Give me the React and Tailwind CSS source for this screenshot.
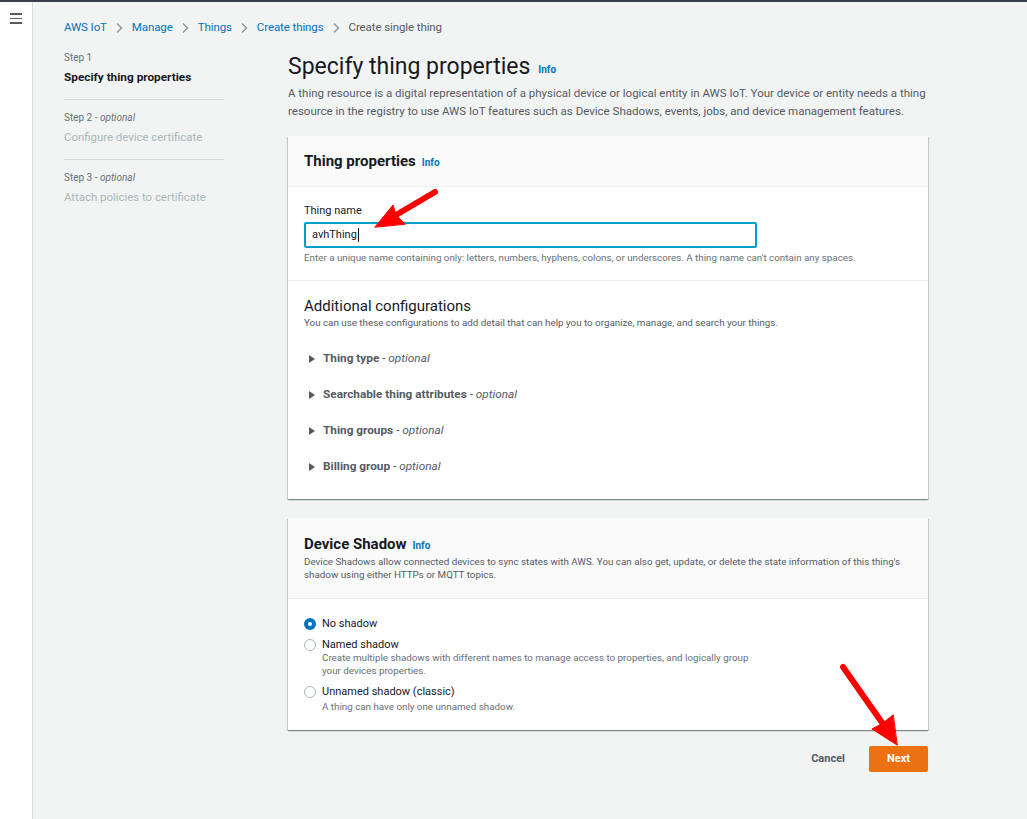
import React from 'react';

const Info = ({ className = '' }) => (
  <span className={`text-[10px] font-bold text-[#0073bb] ${className}`}>Info</span>
);

const Caret = () => (
  <svg width="8" height="10" viewBox="0 0 8 10" className="mr-[7px] shrink-0">
    <path d="M1 1 L7 5 L1 9 Z" fill="#545b64" />
  </svg>
);

const Crumb = ({ children, last }) => (
  <>
    <span className={last ? 'text-[#545b64]' : 'text-[#0073bb]'}>{children}</span>
    {!last && (
      <svg width="10" height="12" viewBox="0 0 10 12" className="mx-[7.5px]">
        <path d="M3 1.5 L7.5 6 L3 10.5" fill="none" stroke="#879596" strokeWidth="1.4" />
      </svg>
    )}
  </>
);

const Radio = ({ checked }) =>
  checked ? (
    <span className="mt-[2px] flex h-[12px] w-[12px] shrink-0 items-center justify-center rounded-full bg-[#0073bb]">
      <span className="h-[4px] w-[4px] rounded-full bg-white" />
    </span>
  ) : (
    <span className="mt-[2px] h-[12px] w-[12px] shrink-0 rounded-full border border-[#aab7b8] bg-white" />
  );

const Expander = ({ title }) => (
  <div className="flex h-[36px] items-center text-[11.8px]">
    <Caret />
    <span className="font-bold text-[#545b64]">{title}</span>
    <span className="ml-[3px] italic text-[#545b64]">- optional</span>
  </div>
);

const StepNav = () => (
  <div className="w-[160px] shrink-0 pt-[1px] text-[11.4px]">
    <div className="text-[10px] leading-[14px] text-[#687078]">Step 1</div>
    <div className="mt-[4px] text-[11.8px] font-bold leading-[16px] text-[#16191f]">Specify thing properties</div>
    <div className="mt-[14px] border-t border-[#d5dbdb]" />
    <div className="mt-[11px] text-[10px] leading-[14px] text-[#687078]">
      Step 2 - <span className="italic">optional</span>
    </div>
    <div className="mt-[4px] leading-[16px] text-[#aab7b8]">Configure device certificate</div>
    <div className="mt-[14px] border-t border-[#d5dbdb]" />
    <div className="mt-[11px] text-[10px] leading-[14px] text-[#687078]">
      Step 3 - <span className="italic">optional</span>
    </div>
    <div className="mt-[4px] leading-[16px] text-[#aab7b8]">Attach policies to certificate</div>
  </div>
);

const cardShadow =
  'shadow-[0_1px_1px_0_rgba(0,28,36,0.3),1px_1px_1px_0_rgba(0,28,36,0.15),-1px_1px_1px_0_rgba(0,28,36,0.15)]';

export default function App() {
  return (
    <div className="relative flex min-h-[819px] w-full border-t-2 border-[#3b4046] bg-[#f2f3f3] font-['Roboto',sans-serif] text-[#16191f]">
      {/* side strip */}
      <div className="w-[33px] shrink-0 border-r border-[#d5dbdb] bg-white">
        <div className="ml-[10px] mt-[11px] flex w-[12px] flex-col gap-[3px]">
          <span className="h-[1.5px] bg-[#545b64]" />
          <span className="h-[1.5px] bg-[#545b64]" />
          <span className="h-[1.5px] bg-[#545b64]" />
        </div>
      </div>

      <div className="flex-1 pl-[31px] pt-[17px]">
        {/* breadcrumbs */}
        <div className="flex h-[18px] items-center text-[11.5px] tracking-[-0.1px]">
          <Crumb>AWS IoT</Crumb>
          <Crumb>Manage</Crumb>
          <Crumb>Things</Crumb>
          <Crumb>Create things</Crumb>
          <Crumb last>Create single thing</Crumb>
        </div>

        <div className="mt-[13px] flex gap-[64px]">
          <StepNav />

          <div className="w-[640px] shrink-0 pt-[2px]">
            <div className="flex items-end">
              <h1 className="text-[23px] leading-[30px] text-[#16191f]">Specify thing properties</h1>
              <Info className="mb-[5px] ml-[8px]" />
            </div>
            <p className="mt-[2px] text-[11.5px] leading-[18px] text-[#545b64]">
              A thing resource is a digital representation of a physical device or logical entity in AWS IoT. Your device or entity needs a thing
              <br />
              resource in the registry to use AWS IoT features such as Device Shadows, events, jobs, and device management features.
            </p>

            {/* Thing properties card */}
            <div className={`mt-[16px] bg-white ${cardShadow}`}>
              <div className="flex h-[51px] items-center border-b border-[#eaeded] bg-[#fafafa] px-[16px]">
                <span className="text-[15px] font-bold">Thing properties</span>
                <Info className="ml-[6px] mt-[2px]" />
              </div>
              <div className="px-[16px] pb-[15px] pt-[16px]">
                <div className="text-[11px] leading-[16px]">Thing name</div>
                <div className="mt-[3px] flex h-[26px] w-[453px] items-center rounded-[2px] border-2 border-[#00a1c9] px-[6px] text-[11px]">
                  avhThing<span className="ml-[1px] h-[14px] w-px bg-[#16191f]" />
                </div>
                <div className="mt-[3px] text-[9.8px] leading-[14px] text-[#687078]">
                  Enter a unique name containing only: letters, numbers, hyphens, colons, or underscores. A thing name can't contain any spaces.
                </div>
              </div>
              <div className="border-t border-[#eaeded] px-[16px] pb-[14px] pt-[15px]">
                <div className="text-[15px] leading-[20px]">Additional configurations</div>
                <div className="text-[9.8px] leading-[14px] text-[#545b64]">
                  You can use these configurations to add detail that can help you to organize, manage, and search your things.
                </div>
                <div className="mt-[11px] pl-[4px]">
                  <Expander title="Thing type" />
                  <Expander title="Searchable thing attributes" />
                  <Expander title="Thing groups" />
                  <Expander title="Billing group" />
                </div>
              </div>
            </div>

            {/* Device Shadow card */}
            <div className={`mt-[19px] bg-white ${cardShadow}`}>
              <div className="border-b border-[#eaeded] bg-[#fafafa] px-[16px] pb-[17px] pt-[17px]">
                <div className="flex items-center">
                  <span className="text-[15px] font-bold leading-[18px]">Device Shadow</span>
                  <Info className="ml-[6px] mt-[3px]" />
                </div>
                <div className="mt-[2px] text-[9.8px] leading-[13px] text-[#545b64]">
                  Device Shadows allow connected devices to sync states with AWS. You can also get, update, or delete the state information of this thing's
                  <br />
                  shadow using either HTTPs or MQTT topics.
                </div>
              </div>
              <div className="flex flex-col gap-[5px] px-[16px] pb-[17px] pt-[17px] text-[11px]">
                <div className="flex gap-[6px]">
                  <Radio checked />
                  <div className="leading-[16px]">No shadow</div>
                </div>
                <div className="flex gap-[6px]">
                  <Radio />
                  <div>
                    <div className="leading-[16px]">Named shadow</div>
                    <div className="-mt-[2px] text-[9.8px] leading-[13px] text-[#687078]">
                      Create multiple shadows with different names to manage access to properties, and logically group
                      <br />
                      your devices properties.
                    </div>
                  </div>
                </div>
                <div className="mt-[2px] flex gap-[6px]">
                  <Radio />
                  <div>
                    <div className="leading-[16px]">Unnamed shadow (classic)</div>
                    <div className="text-[9.8px] leading-[13px] text-[#687078]">A thing can have only one unnamed shadow.</div>
                  </div>
                </div>
              </div>
            </div>

            {/* actions */}
            <div className="mt-[16px] flex items-center justify-end">
              <button className="mr-[24px] text-[11px] font-bold text-[#545b64]">Cancel</button>
              <button className="h-[26px] w-[59px] rounded-[2px] bg-[#ec7211] text-[11px] font-bold text-white">Next</button>
            </div>
          </div>
        </div>
      </div>

      {/* annotation arrows */}
      <svg className="pointer-events-none absolute left-0 top-0" width="1027" height="819">
        <g fill="#ff0000" stroke="#ff0000" strokeLinecap="round" strokeLinejoin="round">
          <line x1="435" y1="190" x2="396" y2="213" strokeWidth="6" />
          <path d="M375 225 L393 203 L396 213 L405 222 Z" strokeWidth="1" />
          <line x1="843" y1="665" x2="883" y2="722" strokeWidth="6" />
          <path d="M897 743 L872 727 L883 721 L893 713 Z" strokeWidth="1" />
        </g>
      </svg>
    </div>
  );
}
